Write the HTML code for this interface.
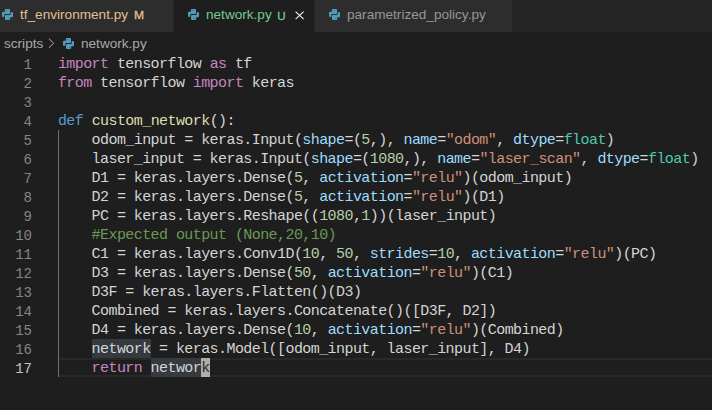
<!DOCTYPE html>
<html><head><meta charset="utf-8">
<style>
html,body{margin:0;padding:0;width:712px;height:410px;overflow:hidden;background:#1e1e1e;}
body{position:relative;font-family:"Liberation Sans",sans-serif;}
.abs{position:absolute;}
#tabs{position:absolute;left:0;top:0;width:712px;height:32px;background:#252526;}
.tab{position:absolute;top:0;height:32px;background:#2d2d2d;}
.tab.active{background:#1e1e1e;}
.tl{position:absolute;top:0;height:29px;line-height:29px;font-size:13.6px;white-space:pre;}
.py{position:absolute;width:11px;height:11px;}
#bc{position:absolute;left:0;top:32px;width:712px;height:22px;}
.bct{position:absolute;top:0.8px;height:22px;line-height:22.6px;font-size:13.6px;color:#a9a9a9;white-space:pre;}
.ln{position:absolute;left:0;width:32px;height:19px;line-height:19px;padding-top:2px;text-align:right;font-family:"Liberation Mono",monospace;font-size:14px;color:#858585;}
.cl{position:absolute;left:57.9px;height:19px;line-height:19px;padding-top:1px;font-family:"Liberation Mono",monospace;font-size:15px;letter-spacing:-0.5728px;color:#d4d4d4;white-space:pre;}
.k{color:#c586c0}.d{color:#569cd6}.f{color:#dcdcaa}.p{color:#9cdcfe}.s{color:#ce9178}.n{color:#b5cea8}.c{color:#6a9955}.t{color:#4ec9b0}
</style></head><body>
<div id="tabs">
  <div class="tab" style="left:-13px;width:186px;">
    <svg class="py" style="left:15px;top:9px" viewBox="0 0 11 11"><g fill="#519aba" stroke="#519aba" stroke-width="2" stroke-linejoin="round"><path d="M3.8,1H7V4.1H1.4V6.9H1V3.8H3.8Z"/><path d="M7.2,10H4V6.9H9.6V4.1H10V7.2H7.2Z"/></g><circle cx="4.3" cy="1.6" r="0.5" fill="#2d2d2d" opacity="0.5"/><circle cx="6.7" cy="9.4" r="0.5" fill="#2d2d2d" opacity="0.5"/></svg>
    <div class="tl" style="left:33px;color:#e2c08d">tf_environment.py</div>
    <div class="tl" style="left:147.4px;top:1.4px;color:#e2c08d;font-size:11.4px;-webkit-text-stroke:0.3px #e2c08d;transform:scaleX(1.06);transform-origin:0 0">M</div>
  </div>
  <div class="tab active" style="left:174px;width:140px;">
    <svg class="py" style="left:14px;top:9px" viewBox="0 0 11 11"><g fill="#519aba" stroke="#519aba" stroke-width="2" stroke-linejoin="round"><path d="M3.8,1H7V4.1H1.4V6.9H1V3.8H3.8Z"/><path d="M7.2,10H4V6.9H9.6V4.1H10V7.2H7.2Z"/></g><circle cx="4.3" cy="1.6" r="0.5" fill="#1e1e1e" opacity="0.5"/><circle cx="6.7" cy="9.4" r="0.5" fill="#1e1e1e" opacity="0.5"/></svg>
    <div class="tl" style="left:32px;color:#73c991">network.py</div>
    <div class="tl" style="left:103.3px;top:0.6px;color:#73c991;font-size:11.6px;-webkit-text-stroke:0.3px #73c991">U</div>
    <svg class="abs" style="left:121px;top:10.5px" width="9" height="9" viewBox="0 0 9 9"><path d="M0.6 0.6L8.6 8.2M8.6 0.6L0.6 8.2" stroke="#f8f8f8" stroke-width="1.05"/></svg>
  </div>
  <div class="tab" style="left:315px;width:197px;">
    <svg class="py" style="left:14px;top:9px" viewBox="0 0 11 11"><g fill="#519aba" stroke="#519aba" stroke-width="2" stroke-linejoin="round"><path d="M3.8,1H7V4.1H1.4V6.9H1V3.8H3.8Z"/><path d="M7.2,10H4V6.9H9.6V4.1H10V7.2H7.2Z"/></g><circle cx="4.3" cy="1.6" r="0.5" fill="#2d2d2d" opacity="0.5"/><circle cx="6.7" cy="9.4" r="0.5" fill="#2d2d2d" opacity="0.5"/></svg>
    <div class="tl" style="left:32px;color:#969696">parametrized_policy.py</div>
  </div>
</div>
<div id="bc">
  <div class="bct" style="left:4px">scripts</div>
  <svg class="abs" style="left:48px;top:5.8px" width="7" height="11" viewBox="0 0 7 11"><path d="M0.9 0.6L5.6 5.2L0.9 9.8" fill="none" stroke="#b0b0b0" stroke-width="1"/></svg>
  <svg class="py" style="left:63px;top:6px" viewBox="0 0 11 11"><g fill="#519aba" stroke="#519aba" stroke-width="2" stroke-linejoin="round"><path d="M3.8,1H7V4.1H1.4V6.9H1V3.8H3.8Z"/><path d="M7.2,10H4V6.9H9.6V4.1H10V7.2H7.2Z"/></g><circle cx="4.3" cy="1.6" r="0.5" fill="#1e1e1e" opacity="0.5"/><circle cx="6.7" cy="9.4" r="0.5" fill="#1e1e1e" opacity="0.5"/></svg>
  <div class="bct" style="left:81px">network.py</div>
</div>
<!-- current line -->
<div class="abs" style="left:58px;top:358px;width:654px;height:15px;border-top:2px solid #282828;border-bottom:2px solid #282828;"></div>
<!-- indent guide -->
<div class="abs" style="left:58px;top:130px;width:1px;height:247px;background:#707070;"></div>
<!-- highlights -->
<div class="abs" style="left:92.2px;top:339px;width:59px;height:19px;background:#343a40;"></div>
<div class="abs" style="left:151.2px;top:358px;width:49.7px;height:19px;background:#343a40;"></div>
<div class="abs" style="left:200.9px;top:358px;width:9.3px;height:19px;background:#aeafad;"></div>

<div class="ln" style="top:54px">1</div>
<div class="ln" style="top:73px">2</div>
<div class="ln" style="top:92px">3</div>
<div class="ln" style="top:111px">4</div>
<div class="ln" style="top:130px">5</div>
<div class="ln" style="top:149px">6</div>
<div class="ln" style="top:168px">7</div>
<div class="ln" style="top:187px">8</div>
<div class="ln" style="top:206px">9</div>
<div class="ln" style="top:225px">10</div>
<div class="ln" style="top:244px">11</div>
<div class="ln" style="top:263px">12</div>
<div class="ln" style="top:282px">13</div>
<div class="ln" style="top:301px">14</div>
<div class="ln" style="top:320px">15</div>
<div class="ln" style="top:339px">16</div>
<div class="ln" style="top:358px;color:#c6c6c6">17</div>

<div class="cl" style="top:54px"><span class="k">import</span> tensorflow <span class="k">as</span> tf</div>
<div class="cl" style="top:73px"><span class="k">from</span> tensorflow <span class="k">import</span> keras</div>
<div class="cl" style="top:111px"><span class="d">def</span> <span class="f">custom_network</span>():</div>
<div class="cl" style="top:130px">    odom_input = keras.Input(<span class="p">shape</span>=(<span class="n">5</span>,), <span class="p">name</span>=<span class="s">"odom"</span>, <span class="p">dtype</span>=<span class="t">float</span>)</div>
<div class="cl" style="top:149px">    laser_input = keras.Input(<span class="p">shape</span>=(<span class="n">1080</span>,), <span class="p">name</span>=<span class="s">"laser_scan"</span>, <span class="p">dtype</span>=<span class="t">float</span>)</div>
<div class="cl" style="top:168px">    D1 = keras.layers.Dense(<span class="n">5</span>, <span class="p">activation</span>=<span class="s">"relu"</span>)(odom_input)</div>
<div class="cl" style="top:187px">    D2 = keras.layers.Dense(<span class="n">5</span>, <span class="p">activation</span>=<span class="s">"relu"</span>)(D1)</div>
<div class="cl" style="top:206px">    PC = keras.layers.Reshape((<span class="n">1080</span>,<span class="n">1</span>))(laser_input)</div>
<div class="cl" style="top:225px">    <span class="c">#Expected output (None,20,10)</span></div>
<div class="cl" style="top:244px">    C1 = keras.layers.Conv1D(<span class="n">10</span>, <span class="n">50</span>, <span class="p">strides</span>=<span class="n">10</span>, <span class="p">activation</span>=<span class="s">"relu"</span>)(PC)</div>
<div class="cl" style="top:263px">    D3 = keras.layers.Dense(<span class="n">50</span>, <span class="p">activation</span>=<span class="s">"relu"</span>)(C1)</div>
<div class="cl" style="top:282px">    D3F = keras.layers.Flatten()(D3)</div>
<div class="cl" style="top:301px">    Combined = keras.layers.Concatenate()([D3F, D2])</div>
<div class="cl" style="top:320px">    D4 = keras.layers.Dense(<span class="n">10</span>, <span class="p">activation</span>=<span class="s">"relu"</span>)(Combined)</div>
<div class="cl" style="top:339px">    network = keras.Model([odom_input, laser_input], D4)</div>
<div class="cl" style="top:358px">    <span class="k">return</span> networ<span style="color:#2a2a2a">k</span></div>
</body></html>
